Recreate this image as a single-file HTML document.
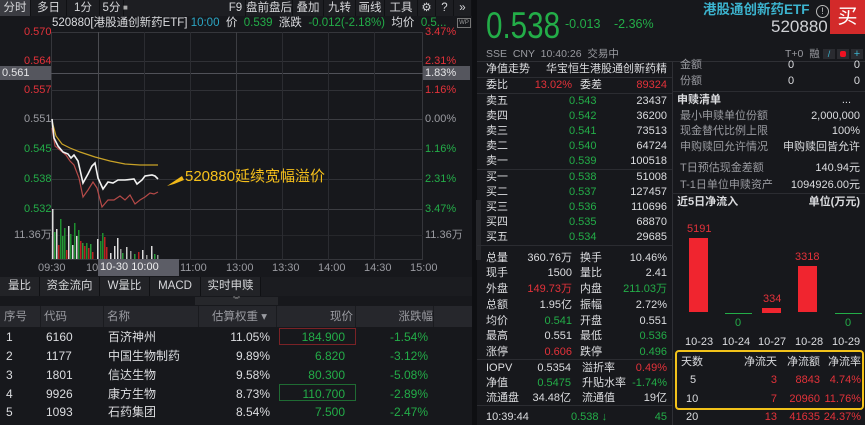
<!DOCTYPE html>
<html><head><meta charset="utf-8">
<style>
*{margin:0;padding:0;box-sizing:border-box}
body{width:865px;height:425px;background:#17181c;font-family:"Liberation Sans","Noto Sans CJK SC",sans-serif;font-size:11px;color:#c9cacf;position:relative;overflow:hidden}
.a{position:absolute;white-space:nowrap;line-height:14px}
.g{color:#23ad48}.r{color:#e3323a}.w{color:#dcdde0}.gr{color:#9a9ba1}.c{color:#2ba6c4}
.hl{position:absolute;height:1px;background:#2b2c31}
.vl{position:absolute;width:1px;background:#2b2c31}
.tab{position:absolute;top:0;height:16px;line-height:16px;text-align:center;font-size:11.5px;color:#d6d7da;background:#1d1e22;border-right:1px solid #101114}
</style></head><body>
<!-- LEFT PANEL -->
<div style="position:absolute;left:0;top:0;width:472px;height:16px;background:#1d1e22"></div>
<div class="tab" style="left:0;width:31px;background:#3b3c42">分时</div>
<div class="tab" style="left:31px;width:36px">多日</div>
<div class="tab" style="left:67px;width:33px">1分</div>
<div class="tab" style="left:100px;width:24px">5分</div>
<div class="a" style="left:123px;top:1px;font-size:8px;color:#aaa">■</div>
<div class="tab" style="left:226px;width:20px">F9</div>
<div class="tab" style="left:246px;width:47px">盘前盘后</div>
<div class="tab" style="left:293px;width:31px">叠加</div>
<div class="tab" style="left:324px;width:32px">九转</div>
<div class="tab" style="left:356px;width:29px">画线</div>
<div class="tab" style="left:385px;width:33px">工具</div>
<div class="tab" style="left:418px;width:18px">⚙</div>
<div class="tab" style="left:436px;width:18px">?</div>
<div class="tab" style="left:454px;width:18px">»</div>
<div class="a" style="left:52px;top:16px;font-size:11.5px"><span class="w">520880[港股通创新药ETF]</span> <span class="c">10:00</span> &nbsp;<span class="w">价</span> &nbsp;<span class="g">0.539</span> &nbsp;<span class="w">涨跌</span> &nbsp;<span class="g">-0.012(-2.18%)</span> &nbsp;<span class="w">均价</span> &nbsp;<span class="g">0.5...</span></div>
<div class="a" style="left:457px;top:18px;width:14px;height:10px;border:1px solid #777;font-size:6px;line-height:8px;text-align:center;color:#999">WP</div>
<!-- chart box -->
<div style="position:absolute;left:51px;top:32px;width:372px;height:228px;border:1px solid #35363b"></div>
<div class="hl" style="left:51px;width:372px;top:61px;background:#303136"></div>
<div class="hl" style="left:0;width:470px;top:73px;background:#505158"></div>
<div class="hl" style="left:51px;width:372px;top:90px;background:#303136"></div>
<div class="hl" style="left:51px;width:372px;top:119px;background:#3c3d42"></div>
<div class="hl" style="left:51px;width:372px;top:149px;background:#303136"></div>
<div class="hl" style="left:51px;width:372px;top:179px;background:#303136"></div>
<div class="hl" style="left:51px;width:372px;top:209px;background:#3c3d42"></div>
<div class="hl" style="left:51px;width:372px;top:235px;background:#26272b"></div>
<div class="vl" style="left:98px;top:32px;height:228px;background:#4a4b50"></div>
<div class="vl" style="left:236px;top:32px;height:228px;background:#3c3d42"></div>
<div class="vl" style="left:144px;top:32px;height:228px"></div>
<div class="vl" style="left:190px;top:32px;height:228px"></div>
<div class="vl" style="left:282px;top:32px;height:228px"></div>
<div class="vl" style="left:328px;top:32px;height:228px"></div>
<div class="vl" style="left:374px;top:32px;height:228px"></div>
<!-- axis labels -->
<div class="a r" style="left:24px;top:25px">0.570</div>
<div class="a r" style="left:24px;top:54px">0.564</div>
<div class="a" style="left:0;top:66px;width:51px;height:14px;background:#55565e;color:#e6e6e8;padding-left:2px">0.561</div>
<div class="a r" style="left:24px;top:83px">0.557</div>
<div class="a gr" style="left:24px;top:112px">0.551</div>
<div class="a g" style="left:24px;top:142px">0.545</div>
<div class="a g" style="left:24px;top:172px">0.538</div>
<div class="a g" style="left:24px;top:202px">0.532</div>
<div class="a gr" style="left:14px;top:228px">11.36万</div>
<div class="a r" style="left:425px;top:25px">3.47%</div>
<div class="a r" style="left:425px;top:54px">2.31%</div>
<div class="a" style="left:423px;top:66px;width:47px;height:14px;background:#55565e;color:#e6e6e8;padding-left:2px">1.83%</div>
<div class="a r" style="left:425px;top:83px">1.16%</div>
<div class="a gr" style="left:425px;top:112px">0.00%</div>
<div class="a g" style="left:425px;top:142px">1.16%</div>
<div class="a g" style="left:425px;top:172px">2.31%</div>
<div class="a g" style="left:425px;top:202px">3.47%</div>
<div class="a gr" style="left:425px;top:228px">11.36万</div>
<div class="a gr" style="left:38px;top:261px">09:30</div>
<div class="a gr" style="left:86px;top:261px">10:</div>
<div class="a" style="left:98px;top:259px;width:81px;height:17px;background:#5c5d66;color:#eee;padding-left:2px;line-height:17px">10-30 10:00</div>
<div class="a gr" style="left:180px;top:261px">11:00</div>
<div class="a gr" style="left:226px;top:261px">13:00</div>
<div class="a gr" style="left:272px;top:261px">13:30</div>
<div class="a gr" style="left:318px;top:261px">14:00</div>
<div class="a gr" style="left:364px;top:261px">14:30</div>
<div class="a gr" style="left:410px;top:261px">15:00</div>
<svg style="position:absolute;left:0;top:0" width="470" height="262">
<polyline fill="none" stroke="#c9a227" stroke-width="1.2" points="52,121 56,136 62,144 70,148 80,152 95,157 110,161 125,164 140,165 158,165"/>
<polyline fill="none" stroke="#b64a48" stroke-width="1.2" points="52,128 55,146 60,150 66,155 70,161 74,165 79,178 83,197 88,190 93,182 97,188 102,207 108,200 114,200 120,196 125,200 130,195 135,204 140,200 145,197 150,193 154,194 158,192"/>
<polyline fill="none" stroke="#f2f2f2" stroke-width="1.6" points="52,119 54,138 58,146 63,152 68,154 71,158 74,155 78,161 83,183 88,174 92,166 95,163 98,178 103,189 108,182 113,183 118,180 125,180 134,179 137,184 142,180 145,176 152,175 155,176 158,179"/>
<g>
<rect x="52" y="209" width="1.5" height="50" fill="#ddd"/><rect x="54" y="232" width="1.5" height="27" fill="#2a9a3a"/><rect x="56" y="229" width="1.5" height="30" fill="#ddd"/><rect x="58" y="245" width="1.5" height="14" fill="#b22"/><rect x="60" y="219" width="1.5" height="40" fill="#1e8f2f"/><rect x="62" y="236" width="1.5" height="23" fill="#2a9a3a"/><rect x="64" y="228" width="1.5" height="31" fill="#1e8f2f"/><rect x="66" y="250" width="1.5" height="9" fill="#b22"/><rect x="68" y="226" width="1.5" height="33" fill="#ddd"/><rect x="70" y="234" width="1.5" height="25" fill="#1e8f2f"/><rect x="72" y="245" width="1.5" height="14" fill="#ddd"/><rect x="74" y="223" width="1.5" height="36" fill="#1e8f2f"/><rect x="76" y="236" width="1.5" height="23" fill="#ddd"/><rect x="78" y="230" width="1.5" height="29" fill="#1e8f2f"/><rect x="80" y="241" width="1.5" height="18" fill="#b22"/><rect x="82" y="243" width="1.5" height="16" fill="#2a9a3a"/><rect x="84" y="246" width="1.5" height="13" fill="#b22"/><rect x="86" y="243" width="1.5" height="16" fill="#1e8f2f"/><rect x="88" y="248" width="1.5" height="11" fill="#b22"/><rect x="90" y="244" width="1.5" height="15" fill="#2a9a3a"/><rect x="92" y="252" width="1.5" height="7" fill="#b22"/><rect x="97" y="239" width="1.5" height="20" fill="#ddd"/><rect x="100" y="241" width="1.5" height="18" fill="#1e8f2f"/><rect x="102" y="233" width="1.5" height="26" fill="#1e8f2f"/><rect x="104" y="237" width="1.5" height="22" fill="#b22"/><rect x="106" y="247" width="1.5" height="12" fill="#b22"/><rect x="110" y="253" width="1.5" height="6" fill="#ddd"/><rect x="114" y="246" width="1.5" height="13" fill="#ddd"/><rect x="117" y="238" width="1.5" height="21" fill="#ddd"/><rect x="120" y="249" width="1.5" height="10" fill="#999"/><rect x="122" y="253" width="1.5" height="6" fill="#2a9a3a"/><rect x="126" y="247" width="1.5" height="12" fill="#ccc"/><rect x="130" y="251" width="1.5" height="8" fill="#999"/><rect x="134" y="254" width="1.5" height="5" fill="#2a9a3a"/><rect x="138" y="252" width="1.5" height="7" fill="#b22"/><rect x="142" y="250" width="1.5" height="9" fill="#ddd"/><rect x="146" y="255" width="1.5" height="4" fill="#999"/><rect x="151" y="246" width="1.5" height="13" fill="#ddd"/><rect x="154" y="254" width="1.5" height="5" fill="#2a9a3a"/><rect x="157" y="255" width="1.5" height="4" fill="#999"/>
</g>
<polygon points="167,186 182,176 184,180 174,184" fill="#f0b818"/>
</svg>
<div class="a" style="left:185px;top:168px;font-size:15px;line-height:18px;color:#f5bf1b">520880延续宽幅溢价</div>
<!-- bottom tabs -->
<div style="position:absolute;left:0;top:277px;width:472px;height:19px;background:#1b1c20"></div>
<div class="tab" style="top:277px;height:19px;line-height:19px;left:0;width:40px;background:#222327">量比</div>
<div class="tab" style="top:277px;height:19px;line-height:19px;left:40px;width:60px;background:#222327">资金流向</div>
<div class="tab" style="top:277px;height:19px;line-height:19px;left:100px;width:50px;background:#222327">W量比</div>
<div class="tab" style="top:277px;height:19px;line-height:19px;left:150px;width:51px;background:#222327">MACD</div>
<div class="tab" style="top:277px;height:19px;line-height:19px;left:201px;width:60px;background:#222327">实时申赎</div>
<div class="a" style="left:195px;top:297px;width:83px;height:8px;background:#26272b;font-size:7px;line-height:8px;text-align:center;color:#aaa">︾</div>
<div style="position:absolute;left:0;top:306px;width:472px;height:21px;background:#26272c"></div>
<div class="a gr" style="left:4px;top:310px;font-size:11.5px">序号</div>
<div class="a gr" style="left:44px;top:310px;font-size:11.5px">代码</div>
<div class="a gr" style="left:107px;top:310px;font-size:11.5px">名称</div>
<div class="a gr" style="right:598px;top:310px;font-size:11.5px">估算权重 ▾</div>
<div class="a gr" style="right:512px;top:310px;font-size:11.5px">现价</div>
<div class="a gr" style="right:432px;top:310px;font-size:11.5px">涨跌幅</div>
<div class="vl" style="left:40px;top:306px;height:21px;background:#1a1b1f"></div>
<div class="vl" style="left:103px;top:306px;height:21px;background:#1a1b1f"></div>
<div class="vl" style="left:198px;top:306px;height:21px;background:#1a1b1f"></div>
<div class="vl" style="left:276px;top:306px;height:21px;background:#1a1b1f"></div>
<div class="vl" style="left:355px;top:306px;height:21px;background:#1a1b1f"></div>
<div class="vl" style="left:433px;top:306px;height:21px;background:#1a1b1f"></div>
<div style="position:absolute;left:279px;top:328px;width:77px;height:17px;border:1px solid #7a2226"></div>
<div style="position:absolute;left:279px;top:384px;width:77px;height:17px;border:1px solid #1f6b33"></div>
<div style="font-size:12px">
<div class="a w" style="left:6px;top:330px">1</div><div class="a w" style="left:46px;top:330px">6160</div><div class="a w" style="left:108px;top:330px">百济神州</div><div class="a w" style="right:595px;top:330px">11.05%</div><div class="a g" style="right:520px;top:330px">184.900</div><div class="a g" style="right:437px;top:330px">-1.54%</div>
<div class="a w" style="left:6px;top:349px">2</div><div class="a w" style="left:46px;top:349px">1177</div><div class="a w" style="left:108px;top:349px">中国生物制药</div><div class="a w" style="right:595px;top:349px">9.89%</div><div class="a g" style="right:520px;top:349px">6.820</div><div class="a g" style="right:437px;top:349px">-3.12%</div>
<div class="a w" style="left:6px;top:368px">3</div><div class="a w" style="left:46px;top:368px">1801</div><div class="a w" style="left:108px;top:368px">信达生物</div><div class="a w" style="right:595px;top:368px">9.58%</div><div class="a g" style="right:520px;top:368px">80.300</div><div class="a g" style="right:437px;top:368px">-5.08%</div>
<div class="a w" style="left:6px;top:387px">4</div><div class="a w" style="left:46px;top:387px">9926</div><div class="a w" style="left:108px;top:387px">康方生物</div><div class="a w" style="right:595px;top:387px">8.73%</div><div class="a g" style="right:520px;top:387px">110.700</div><div class="a g" style="right:437px;top:387px">-2.89%</div>
<div class="a w" style="left:6px;top:405px">5</div><div class="a w" style="left:46px;top:405px">1093</div><div class="a w" style="left:108px;top:405px">石药集团</div><div class="a w" style="right:595px;top:405px">8.54%</div><div class="a g" style="right:520px;top:405px">7.500</div><div class="a g" style="right:437px;top:405px">-2.47%</div>
</div>
<!-- divider -->
<div style="position:absolute;left:472px;top:0;width:5px;height:425px;background:#0e0f12"></div>
<div style="position:absolute;left:476px;top:200px;width:5px;height:60px;background:#26272b"></div>
<!-- RIGHT PANEL -->
<div class="a g" style="left:486px;top:6px;font-size:37px;line-height:40px;transform:scaleX(0.8);transform-origin:0 0">0.538</div>
<div class="a g" style="left:565px;top:17px;font-size:12.5px">-0.013</div>
<div class="a g" style="left:614px;top:17px;font-size:12.5px">-2.36%</div>
<div class="a" style="left:703px;top:2px;font-size:13.5px;line-height:16px;color:#3cb4cf;font-weight:bold">港股通创新药ETF</div>
<div class="a" style="left:816px;top:5px;width:13px;height:13px;border:1px solid #bbb;border-radius:50%;font-size:9px;line-height:11px;text-align:center;color:#ccc">!</div>
<div class="a" style="left:830px;top:0;width:35px;height:34px;background:#d32a2a;color:#fff;font-size:20px;line-height:34px;text-align:center">买</div>
<div class="a" style="left:771px;top:18px;font-size:17px;line-height:17px;color:#d0d1d5">520880</div>
<div class="a gr" style="left:486px;top:47px;font-size:10.5px">SSE &nbsp;CNY &nbsp;10:40:26 &nbsp;交易中</div>
<div class="a gr" style="left:785px;top:47px;font-size:10.5px">T+0 &nbsp;融</div>
<div class="a" style="left:823px;top:49px;width:12px;height:10px;background:#2a2b30;color:#3cb4cf;font-size:9px;line-height:10px;text-align:center">/</div>
<div class="a" style="left:837px;top:49px;width:12px;height:10px;background:#2a2b30"><div style="margin:2px 3px;width:6px;height:6px;background:#e12;border-radius:2px"></div></div>
<div class="a" style="left:851px;top:49px;width:12px;height:10px;background:#2a2b30;color:#3cb4cf;font-size:11px;line-height:10px;text-align:center">+</div>
<div class="hl" style="left:477px;width:388px;top:61px;background:#2f3035"></div>
<div class="vl" style="left:672px;top:61px;height:364px;background:#2f3035"></div>
<div class="hl" style="left:477px;width:195px;top:77px"></div>
<div class="hl" style="left:477px;width:195px;top:93px"></div>
<div class="hl" style="left:477px;width:195px;top:169px"></div>
<div class="hl" style="left:477px;width:195px;top:245px"></div>
<div class="hl" style="left:477px;width:195px;top:359px"></div>
<div class="hl" style="left:477px;width:195px;top:405px"></div>
<div class="hl" style="left:672px;width:193px;top:91px"></div>
<div class="hl" style="left:672px;width:193px;top:193px"></div>
<div style="font-size:11px">
<div class="a w" style="left:486px;top:62px">净值走势</div><div class="a w" style="right:198px;top:62px">华宝恒生港股通创新药精</div>
<div class="a w" style="left:486px;top:78px">委比</div><div class="a r" style="right:293px;top:78px">13.02%</div><div class="a w" style="left:580px;top:78px">委差</div><div class="a r" style="right:198px;top:78px">89324</div>
<div class="a w" style="left:486px;top:94px">卖五</div><div class="a g" style="left:569px;top:94px">0.543</div><div class="a w" style="right:198px;top:94px">23437</div>
<div class="a w" style="left:486px;top:109px">卖四</div><div class="a g" style="left:569px;top:109px">0.542</div><div class="a w" style="right:198px;top:109px">36200</div>
<div class="a w" style="left:486px;top:124px">卖三</div><div class="a g" style="left:569px;top:124px">0.541</div><div class="a w" style="right:198px;top:124px">73513</div>
<div class="a w" style="left:486px;top:139px">卖二</div><div class="a g" style="left:569px;top:139px">0.540</div><div class="a w" style="right:198px;top:139px">64724</div>
<div class="a w" style="left:486px;top:154px">卖一</div><div class="a g" style="left:569px;top:154px">0.539</div><div class="a w" style="right:198px;top:154px">100518</div>
<div class="a w" style="left:486px;top:170px">买一</div><div class="a g" style="left:569px;top:170px">0.538</div><div class="a w" style="right:198px;top:170px">51008</div>
<div class="a w" style="left:486px;top:185px">买二</div><div class="a g" style="left:569px;top:185px">0.537</div><div class="a w" style="right:198px;top:185px">127457</div>
<div class="a w" style="left:486px;top:200px">买三</div><div class="a g" style="left:569px;top:200px">0.536</div><div class="a w" style="right:198px;top:200px">110696</div>
<div class="a w" style="left:486px;top:215px">买四</div><div class="a g" style="left:569px;top:215px">0.535</div><div class="a w" style="right:198px;top:215px">68870</div>
<div class="a w" style="left:486px;top:230px">买五</div><div class="a g" style="left:569px;top:230px">0.534</div><div class="a w" style="right:198px;top:230px">29685</div>
<div class="a w" style="left:486px;top:251px">总量</div><div class="a w" style="right:293px;top:251px">360.76万</div><div class="a w" style="left:580px;top:251px">换手</div><div class="a w" style="right:198px;top:251px">10.46%</div>
<div class="a w" style="left:486px;top:266px">现手</div><div class="a w" style="right:293px;top:266px">1500</div><div class="a w" style="left:580px;top:266px">量比</div><div class="a w" style="right:198px;top:266px">2.41</div>
<div class="a w" style="left:486px;top:282px">外盘</div><div class="a r" style="right:293px;top:282px">149.73万</div><div class="a w" style="left:580px;top:282px">内盘</div><div class="a g" style="right:198px;top:282px">211.03万</div>
<div class="a w" style="left:486px;top:298px">总额</div><div class="a w" style="right:293px;top:298px">1.95亿</div><div class="a w" style="left:580px;top:298px">振幅</div><div class="a w" style="right:198px;top:298px">2.72%</div>
<div class="a w" style="left:486px;top:314px">均价</div><div class="a g" style="right:293px;top:314px">0.541</div><div class="a w" style="left:580px;top:314px">开盘</div><div class="a w" style="right:198px;top:314px">0.551</div>
<div class="a w" style="left:486px;top:329px">最高</div><div class="a w" style="right:293px;top:329px">0.551</div><div class="a w" style="left:580px;top:329px">最低</div><div class="a g" style="right:198px;top:329px">0.536</div>
<div class="a w" style="left:486px;top:345px">涨停</div><div class="a r" style="right:293px;top:345px">0.606</div><div class="a w" style="left:580px;top:345px">跌停</div><div class="a g" style="right:198px;top:345px">0.496</div>
<div class="a w" style="left:486px;top:361px">IOPV</div><div class="a w" style="right:294px;top:361px">0.5354</div><div class="a w" style="left:582px;top:361px">溢折率</div><div class="a r" style="right:198px;top:361px">0.49%</div>
<div class="a w" style="left:486px;top:376px">净值</div><div class="a g" style="right:294px;top:376px">0.5475</div><div class="a w" style="left:582px;top:376px">升贴水率</div><div class="a g" style="right:198px;top:376px">-1.74%</div>
<div class="a w" style="left:486px;top:391px">流通盘</div><div class="a w" style="right:294px;top:391px">34.48亿</div><div class="a w" style="left:582px;top:391px">流通值</div><div class="a w" style="right:198px;top:391px">19亿</div>
<div class="a w" style="left:486px;top:410px">10:39:44</div><div class="a g" style="left:571px;top:410px">0.538 ↓</div><div class="a g" style="right:198px;top:410px">45</div>
<!-- right column -->
<div class="a gr" style="left:680px;top:58px">金额</div><div class="a w" style="left:788px;top:58px">0</div><div class="a w" style="right:5px;top:58px">0</div>
<div class="a gr" style="left:680px;top:74px">份额</div><div class="a w" style="left:788px;top:74px">0</div><div class="a w" style="right:5px;top:74px">0</div>
<div class="a w" style="left:677px;top:93px;font-weight:bold">申赎清单</div><div class="a w" style="right:14px;top:93px">...</div>
<div class="a gr" style="left:680px;top:109px">最小申赎单位份额</div><div class="a w" style="right:5px;top:109px">2,000,000</div>
<div class="a gr" style="left:680px;top:124px">现金替代比例上限</div><div class="a w" style="right:5px;top:124px">100%</div>
<div class="a gr" style="left:680px;top:140px">申购赎回允许情况</div><div class="a w" style="right:5px;top:140px">申购赎回皆允许</div>
<div class="a gr" style="left:680px;top:161px">T日预估现金差额</div><div class="a w" style="right:5px;top:161px">140.94元</div>
<div class="a gr" style="left:680px;top:178px">T-1日单位申赎资产</div><div class="a w" style="right:5px;top:178px">1094926.00元</div>
<div class="a w" style="left:677px;top:195px;font-weight:bold">近5日净流入</div><div class="a w" style="right:5px;top:195px;font-weight:bold">单位(万元)</div>
<div class="a r" style="left:687px;top:222px">5191</div>
<div style="position:absolute;left:689px;top:238px;width:19px;height:74px;background:#f0252f"></div>
<div class="a r" style="left:795px;top:250px">3318</div>
<div style="position:absolute;left:798px;top:266px;width:19px;height:46px;background:#f0252f"></div>
<div class="a r" style="left:763px;top:292px">334</div>
<div style="position:absolute;left:762px;top:308px;width:19px;height:5px;background:#f0252f"></div>
<div style="position:absolute;left:725px;top:313px;width:27px;height:1px;background:#23ad48"></div>
<div style="position:absolute;left:835px;top:313px;width:27px;height:1px;background:#23ad48"></div>
<div class="a g" style="left:735px;top:316px">0</div><div class="a g" style="left:845px;top:316px">0</div>
<div class="a w" style="left:685px;top:335px">10-23</div><div class="a w" style="left:722px;top:335px">10-24</div><div class="a w" style="left:758px;top:335px">10-27</div><div class="a w" style="left:795px;top:335px">10-28</div><div class="a w" style="left:832px;top:335px">10-29</div>
<div style="position:absolute;left:675px;top:350px;width:189px;height:60px;border:2px solid #f2c21a;border-radius:4px"></div>
<div class="a w" style="left:681px;top:355px">天数</div><div class="a w" style="right:88px;top:355px">净流天</div><div class="a w" style="right:45px;top:355px">净流额</div><div class="a w" style="right:4px;top:355px">净流率</div>
<div class="a w" style="left:690px;top:373px">5</div><div class="a r" style="right:88px;top:373px">3</div><div class="a r" style="right:45px;top:373px">8843</div><div class="a r" style="right:4px;top:373px">4.74%</div>
<div class="a w" style="left:686px;top:392px">10</div><div class="a r" style="right:88px;top:392px">7</div><div class="a r" style="right:45px;top:392px">20960</div><div class="a r" style="right:4px;top:392px">11.76%</div>
<div class="a w" style="left:686px;top:410px">20</div><div class="a r" style="right:88px;top:410px">13</div><div class="a r" style="right:45px;top:410px">41635</div><div class="a r" style="right:4px;top:410px">24.37%</div>
</div>
</body></html>
